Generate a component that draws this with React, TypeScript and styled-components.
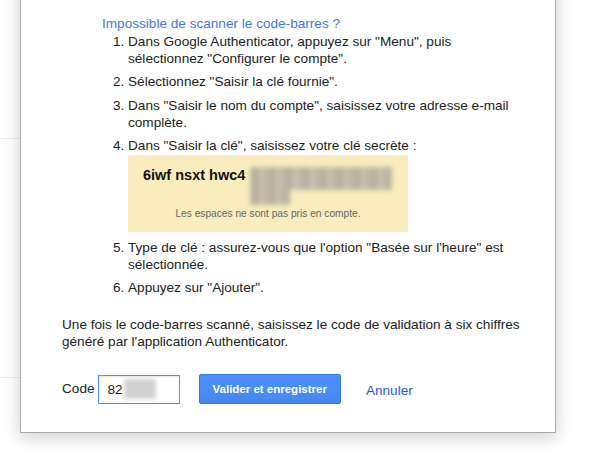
import React from "react";
import styled, { createGlobalStyle } from "styled-components";

const Global = createGlobalStyle`
  html, body { margin: 0; padding: 0; background: #fff; }
  body { font-family: "Liberation Sans", Arial, sans-serif; color: #222; overflow: hidden; }
`;

const Stage = styled.div`
  position: relative;
  width: 594px;
  height: 455px;
  overflow: hidden;
  background: #fff;
`;

const Backdrop = styled.div`
  display: flex;
  flex-direction: column;
  width: 300px;
`;

const BackRow = styled.div<{ $h: number }>`
  height: ${(p) => p.$h}px;
  border-bottom: 1px solid #ebebeb;
`;

const Dialog = styled.div`
  position: absolute;
  left: 20px;
  top: -30px;
  width: 465px;
  padding: 44px 28px 28px 41px;
  background: #fff;
  border: 1px solid #acacac;
  box-shadow: 0 4px 16px rgba(0, 0, 0, 0.2);
  font-size: 13.6px;
  line-height: 17px;
`;

const Help = styled.div`
  margin: 0 14px 0 40px;
`;

const HelpTitle = styled.div`
  color: #4677de;
  margin-bottom: 0.5px;
`;

const Steps = styled.ol`
  margin: 0 0 19.5px;
  padding-left: 26px;
`;

const Step = styled.li`
  margin-bottom: 6.5px;
`;

const KeyBox = styled.div`
  width: 265px;
  margin: 1px 0 1.5px;
  padding: 11px 0 11px 15px;
  background: #f9edbe;
`;

const KeyRow = styled.div`
  display: flex;
  align-items: flex-start;
  gap: 5px;
`;

const KeyText = styled.span`
  font-weight: bold;
  font-size: 14.5px;
  line-height: 18px;
  color: #111;
  white-space: nowrap;
`;

const Redacted = styled.div`
  display: flex;
  flex-direction: column;
  margin-top: 1px;
  filter: blur(2.5px);
`;

const RedactBar = styled.div<{ $w: number; $h: number }>`
  width: ${(p) => p.$w}px;
  height: ${(p) => p.$h}px;
  background: repeating-linear-gradient(
    90deg,
    #c4bba6 0px,
    #b2ab9c 6px,
    #cdc5ae 11px,
    #b8b1a0 17px
  );
`;

const Hint = styled.div`
  margin-top: 2px;
  padding-right: 15px;
  text-align: center;
  font-size: 10.2px;
  line-height: 14px;
  color: #666;
`;

const Para = styled.p`
  margin: 0;
`;

const CodeRow = styled.div`
  display: flex;
  align-items: center;
  margin-top: 24px;
  height: 30px;
`;

const CodeLabel = styled.label`
  margin-right: 3px;
`;

const CodeInput = styled.div`
  box-sizing: border-box;
  display: flex;
  align-items: center;
  width: 82px;
  height: 29px;
  margin-top: 1px;
  padding-left: 9px;
  border: 1px solid #4d90fe;
  box-shadow: inset 0 1px 2px rgba(0, 0, 0, 0.1);
  color: #222;
`;

const InputBlur = styled.span`
  display: inline-block;
  width: 32px;
  height: 20px;
  margin-left: 1px;
  background: #d2d2d2;
  filter: blur(2px);
`;

const Primary = styled.button`
  box-sizing: border-box;
  height: 30px;
  margin-left: 19px;
  padding: 0 13px;
  border: 1px solid #3079ed;
  border-radius: 2px;
  background: linear-gradient(#4d90fe, #4787ed);
  color: #fff;
  font-family: "Liberation Sans", Arial, sans-serif;
  font-weight: bold;
  font-size: 11.5px;
`;

const CancelLink = styled.a`
  margin-left: 25px;
  margin-top: 3px;
  color: #2a5bd7;
  text-decoration: none;
`;

export default function App() {
  return (
    <>
      <Global />
      <Stage>
        <Backdrop>
          <BackRow $h={138} />
          <BackRow $h={238} />
        </Backdrop>
        <Dialog>
          <Help>
            <HelpTitle>Impossible de scanner le code-barres ?</HelpTitle>
            <Steps>
              <Step>
                Dans Google Authenticator, appuyez sur "Menu", puis sélectionnez "Configurer le
                compte".
              </Step>
              <Step>Sélectionnez "Saisir la clé fournie".</Step>
              <Step>Dans "Saisir le nom du compte", saisissez votre adresse e-mail complète.</Step>
              <Step>
                Dans "Saisir la clé", saisissez votre clé secrète :
                <KeyBox>
                  <KeyRow>
                    <KeyText>6iwf nsxt hwc4</KeyText>
                    <Redacted>
                      <RedactBar $w={142} $h={23} />
                      <RedactBar $w={40} $h={15} />
                    </Redacted>
                  </KeyRow>
                  <Hint>Les espaces ne sont pas pris en compte.</Hint>
                </KeyBox>
              </Step>
              <Step>Type de clé : assurez-vous que l'option "Basée sur l'heure" est sélectionnée.</Step>
              <Step>Appuyez sur "Ajouter".</Step>
            </Steps>
          </Help>
          <Para>
            Une fois le code-barres scanné, saisissez le code de validation à six chiffres généré
            par l'application Authenticator.
          </Para>
          <CodeRow>
            <CodeLabel>Code</CodeLabel>
            <CodeInput>
              82
              <InputBlur />
            </CodeInput>
            <Primary>Valider et enregistrer</Primary>
            <CancelLink href="#">Annuler</CancelLink>
          </CodeRow>
        </Dialog>
      </Stage>
    </>
  );
}
